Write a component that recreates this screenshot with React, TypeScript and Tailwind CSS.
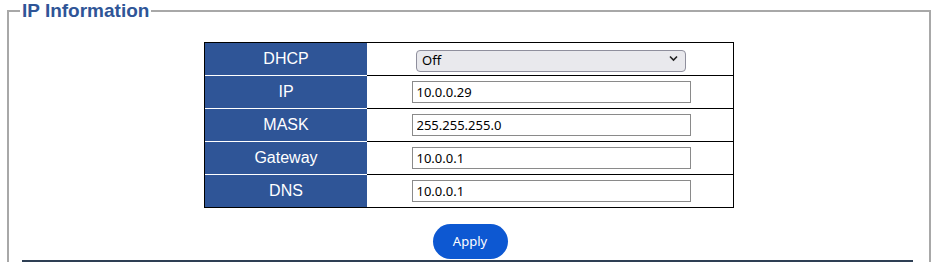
import React, { useState } from 'react';

type Row = { label: string; value: string };

const rows: Row[] = [
  { label: 'IP', value: '10.0.0.29' },
  { label: 'MASK', value: '255.255.255.0' },
  { label: 'Gateway', value: '10.0.0.1' },
  { label: 'DNS', value: '10.0.0.1' },
];

const LabelCell = ({ children, last }: { children: React.ReactNode; last?: boolean }) => (
  <div
    className={`w-[162px] shrink-0 bg-[#2f5597] text-white text-[16px] flex items-center justify-center ${
      last ? '' : 'border-b border-white'
    }`}
  >
    {children}
  </div>
);

const App: React.FC = () => {
  const [dhcp, setDhcp] = useState('Off');
  const [values, setValues] = useState(rows.map((r) => r.value));

  return (
    <div className="w-[938px] h-[262px] overflow-hidden bg-white font-['Liberation_Sans',Arial,sans-serif]">
      <fieldset className="ml-[7px] w-[924px] border-2 border-[#a8a8a8] px-[11px] pb-4 min-h-[300px]">
        <legend className="px-[2px] text-[19px] leading-[22px] font-bold text-[#2f5597]">IP Information</legend>

        <div className="flex flex-col items-center">
          <div className="mt-[20px] w-[530px] border border-black flex flex-col">
            {/* DHCP */}
            <div className="flex h-[33px]">
              <LabelCell>DHCP</LabelCell>
              <div className="flex-1 flex items-center justify-center border-b border-black">
                <div className="relative w-[270px] h-[22px] ml-[2px]">
                  <select
                    value={dhcp}
                    onChange={(e) => setDhcp(e.target.value)}
                    className="appearance-none w-full h-full rounded-[4px] border border-[#8f8f9d] bg-[#e9e9ed] pl-[5px] text-[13px] text-black font-['Noto_Sans',sans-serif] leading-none"
                  >
                    <option>Off</option>
                    <option>On</option>
                  </select>
                  <svg
                    className="absolute right-[8px] top-[7px] pointer-events-none"
                    width="9"
                    height="7"
                    viewBox="0 0 9 7"
                  >
                    <path d="M1 1.5 L4.5 5 L8 1.5" fill="none" stroke="#222" strokeWidth="1.6" />
                  </svg>
                </div>
              </div>
            </div>

            {rows.map((r, i) => {
              const last = i === rows.length - 1;
              return (
                <div key={r.label} className={`flex ${last ? 'h-[32px]' : 'h-[33px]'}`}>
                  <LabelCell last={last}>{r.label}</LabelCell>
                  <div className={`flex-1 flex items-center justify-center ${last ? '' : 'border-b border-black'}`}>
                    <input
                      value={values[i]}
                      onChange={(e) => setValues((prev) => prev.map((v, j) => (j === i ? e.target.value : v)))}
                      className="w-[279px] h-[22px] ml-[2px] border border-[#8a8a8a] bg-white px-[4px] text-[13px] text-black font-['Noto_Sans',sans-serif] outline-none"
                    />
                  </div>
                </div>
              );
            })}
          </div>

          <button className="mt-[16px] ml-[2px] w-[75px] h-[35px] rounded-full bg-[#0d58d2] text-white text-[13px] font-['Noto_Sans',sans-serif]">
            Apply
          </button>
        </div>

        <div className="mt-[1px] mx-[2px] mr-[5px] h-[2px] bg-[#2e3f54]" />
      </fieldset>
    </div>
  );
};

export default App;
